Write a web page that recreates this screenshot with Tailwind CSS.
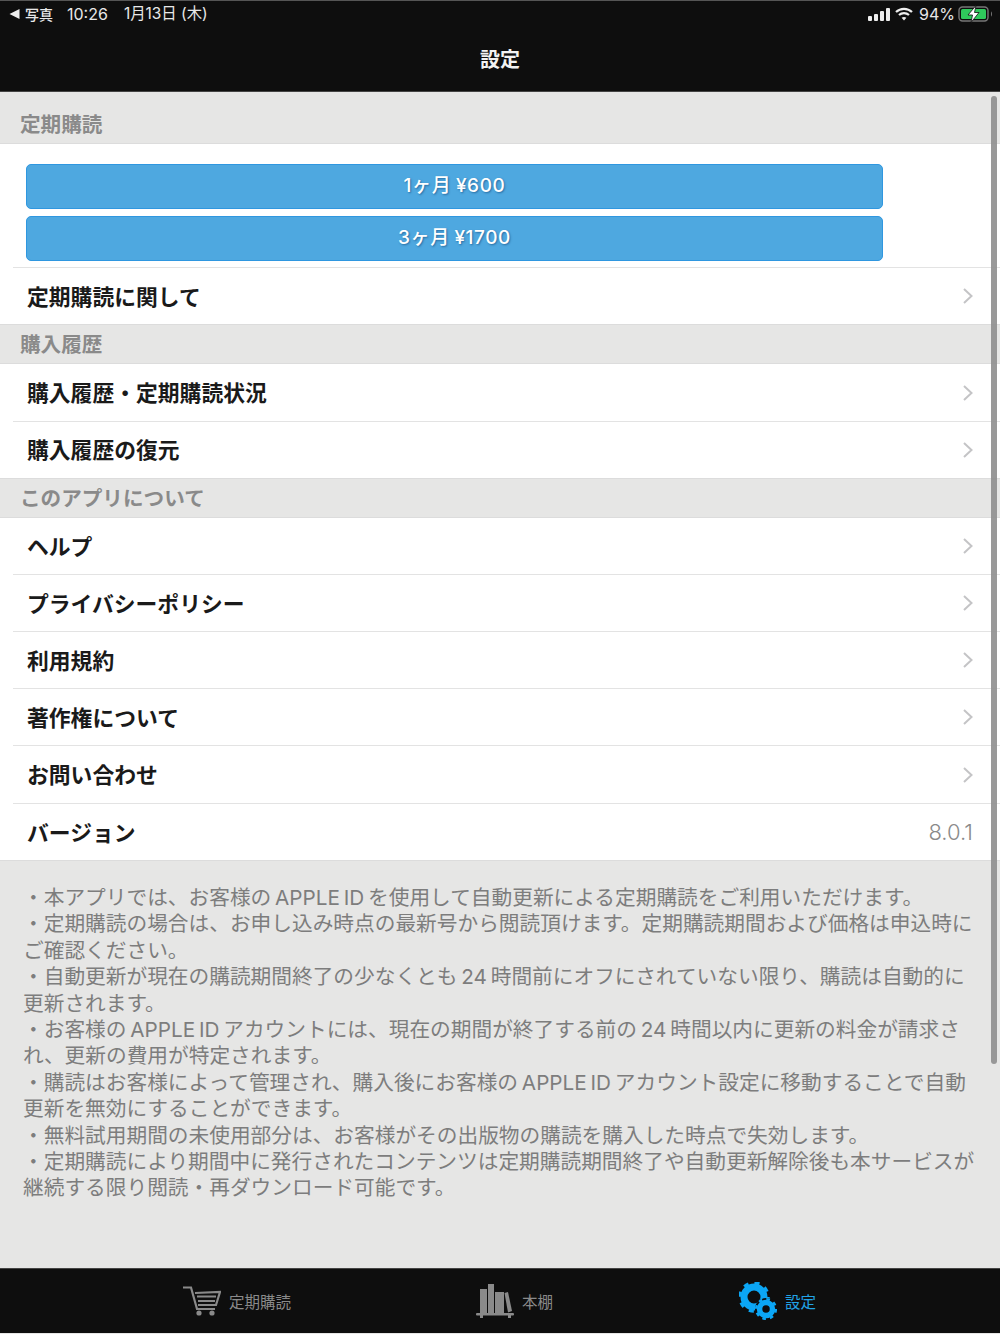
<!DOCTYPE html>
<html lang="ja">
<head>
<meta charset="utf-8">
<script src="https://cdn.jsdelivr.net/npm/@tailwindcss/browser@4"></script>
<title>設定</title>
</head>
<body class="bg-white">
<div class="relative w-[1000px] h-[1334px] overflow-hidden flex flex-col bg-[#e6e6e5] font-['Noto_Sans_CJK_JP','Noto_Sans',sans-serif]">
  <!-- Nav -->
  <header class="h-[92px] shrink-0 bg-[#0e0e0e] border-t border-[#555] border-b border-b-[#444] flex flex-col text-white">
    <div class="h-[26px] flex items-center justify-between pl-[9px] pr-[6px] text-[15.4px] text-[#e8e8e8] font-['Inter','Noto_Sans_CJK_JP',sans-serif]">
      <div class="flex items-center">
        <svg width="11" height="10" viewBox="0 0 11 10"><path d="M0.5 5 L10.5 0 V10 Z" fill="#eee"/></svg>
        <span class="ml-[5px] text-[14px] font-medium">写真</span>
        <span class="ml-[14px] text-[16px]">10:26</span>
        <span class="ml-[16px]">1月13日 (木)</span>
      </div>
      <div class="flex items-center">
        <svg width="22" height="13" viewBox="0 0 22 13" fill="#eee"><rect x="0" y="8" width="4" height="5" rx="1"/><rect x="6" y="6" width="4" height="7" rx="1"/><rect x="12" y="3" width="4" height="10" rx="1"/><rect x="18" y="0" width="4" height="13" rx="1"/></svg>
        <svg class="ml-[5px]" width="18" height="14" viewBox="0 0 18 14" fill="none" stroke="#eee" stroke-width="2.2"><path d="M1 5 C5.5 0.7 12.5 0.7 17 5"/><path d="M4 8 C6.8 5.4 11.2 5.4 14 8"/><path d="M9 13.5 L6.6 10.8 C8 9.7 10 9.7 11.4 10.8 Z" fill="#eee" stroke="none"/></svg>
        <span class="ml-[6px] text-[16px]">94%</span>
        <svg class="ml-[3px]" width="36" height="18" viewBox="0 0 36 18"><rect x="1" y="2" width="29" height="14" rx="3.5" fill="none" stroke="#777" stroke-width="1.4"/><rect x="3" y="4" width="25" height="10" rx="1.5" fill="#2fc95c"/><path d="M33 6.5 C34.3 7 34.3 11 33 11.5 Z" fill="#777"/><path d="M18 0.5 L10 10 H14.5 L13 17.5 L21 7.5 H16.5 Z" fill="#fff" stroke="#0e0e0e" stroke-width="0.8"/></svg>
      </div>
    </div>
    <div class="h-[30px] mt-[17px] flex items-center justify-center text-[20px] font-bold text-[#f2f2f2]">設定</div>
  </header>

  <main class="flex-1 flex flex-col">
    <div class="h-[52px] pl-[20px] pt-[14px] text-[20.6px] leading-[35px] font-bold text-[#8a8a8a] border-b border-[#dcdcdc]">定期購読</div>
    <section class="bg-white">
      <div class="pt-[20px] pb-[6px] pl-[26px] flex flex-col gap-[7px]">
        <button class="w-[857px] h-[45px] rounded-[5px] bg-[#4ea8e0] border border-[#2f97e0] text-white text-[19px] font-medium font-['Inter','Noto_Sans_CJK_JP',sans-serif] tracking-[0.6px] [word-spacing:-1px] [text-shadow:1px_1px_2px_rgba(0,50,100,0.5)]">1ヶ月 ¥600</button>
        <button class="w-[857px] h-[45px] rounded-[5px] bg-[#4ea8e0] border border-[#2f97e0] text-white text-[19px] font-medium font-['Inter','Noto_Sans_CJK_JP',sans-serif] tracking-[0.6px] [word-spacing:-1px] [text-shadow:1px_1px_2px_rgba(0,50,100,0.5)]">3ヶ月 ¥1700</button>
      </div>
      <div class="ml-[13px] border-t border-[#e3e3e3] h-[57px] pl-[14px] pr-[27px] flex items-center justify-between">
        <span class="text-[21.8px] font-bold text-[#1a1a1a]">定期購読に関して</span>
        <svg width="10" height="16" viewBox="0 0 10 16" fill="none" stroke="#c4c4c6" stroke-width="2"><path d="M1 1 L8.5 8 L1 15"/></svg>
      </div>
    </section>

    <div class="h-[40px] pl-[20px] pb-[1px] border-y border-[#dcdcdc] flex items-center text-[20.6px] font-bold text-[#8a8a8a]">購入履歴</div>
    <section class="bg-white">
      <div class="ml-[13px] h-[57px] pl-[14px] pr-[27px] flex items-center justify-between">
        <span class="text-[21.8px] font-bold text-[#1a1a1a]">購入履歴・定期購読状況</span>
        <svg width="10" height="16" viewBox="0 0 10 16" fill="none" stroke="#c4c4c6" stroke-width="2"><path d="M1 1 L8.5 8 L1 15"/></svg>
      </div>
      <div class="ml-[13px] border-t border-[#e3e3e3] h-[57px] pl-[14px] pr-[27px] pb-[1px] flex items-center justify-between">
        <span class="text-[21.8px] font-bold text-[#1a1a1a]">購入履歴の復元</span>
        <svg width="10" height="16" viewBox="0 0 10 16" fill="none" stroke="#c4c4c6" stroke-width="2"><path d="M1 1 L8.5 8 L1 15"/></svg>
      </div>
    </section>

    <div class="h-[40px] pl-[20px] pb-[1px] border-y border-[#dcdcdc] flex items-center text-[20.6px] font-bold text-[#8a8a8a]">このアプリについて</div>
    <section class="bg-white border-b border-[#dcdcdc]">
      <div class="ml-[13px] h-[56px] pl-[14px] pr-[27px] flex items-center justify-between">
        <span class="text-[21.8px] font-bold text-[#1a1a1a]">ヘルプ</span>
        <svg width="10" height="16" viewBox="0 0 10 16" fill="none" stroke="#c4c4c6" stroke-width="2"><path d="M1 1 L8.5 8 L1 15"/></svg>
      </div>
      <div class="ml-[13px] border-t border-[#e3e3e3] h-[57px] pl-[14px] pr-[27px] flex items-center justify-between">
        <span class="text-[21.8px] font-bold text-[#1a1a1a]">プライバシーポリシー</span>
        <svg width="10" height="16" viewBox="0 0 10 16" fill="none" stroke="#c4c4c6" stroke-width="2"><path d="M1 1 L8.5 8 L1 15"/></svg>
      </div>
      <div class="ml-[13px] border-t border-[#e3e3e3] h-[57px] pl-[14px] pr-[27px] flex items-center justify-between">
        <span class="text-[21.8px] font-bold text-[#1a1a1a]">利用規約</span>
        <svg width="10" height="16" viewBox="0 0 10 16" fill="none" stroke="#c4c4c6" stroke-width="2"><path d="M1 1 L8.5 8 L1 15"/></svg>
      </div>
      <div class="ml-[13px] border-t border-[#e3e3e3] h-[57px] pl-[14px] pr-[27px] flex items-center justify-between">
        <span class="text-[21.8px] font-bold text-[#1a1a1a]">著作権について</span>
        <svg width="10" height="16" viewBox="0 0 10 16" fill="none" stroke="#c4c4c6" stroke-width="2"><path d="M1 1 L8.5 8 L1 15"/></svg>
      </div>
      <div class="ml-[13px] border-t border-[#e3e3e3] h-[58px] pl-[14px] pr-[27px] flex items-center justify-between">
        <span class="text-[21.8px] font-bold text-[#1a1a1a]">お問い合わせ</span>
        <svg width="10" height="16" viewBox="0 0 10 16" fill="none" stroke="#c4c4c6" stroke-width="2"><path d="M1 1 L8.5 8 L1 15"/></svg>
      </div>
      <div class="ml-[13px] border-t border-[#e3e3e3] h-[57px] pl-[14px] pr-[27px] flex items-center justify-between">
        <span class="text-[21.8px] font-bold text-[#1a1a1a]">バージョン</span>
        <span class="text-[22px] pt-[1px] text-[#8a8a8a] font-['Inter',sans-serif] font-light">8.0.1</span>
      </div>
    </section>

    <div class="pt-[24px] pl-[23px] pr-[20px] text-[20.7px] leading-[26.4px] text-[#7d7d7d] whitespace-nowrap font-['Inter','Noto_Sans_CJK_JP',sans-serif] [word-spacing:-2px]">
      <div>・本アプリでは、お客様の APPLE ID を使用して自動更新による定期購読をご利用いただけます。</div>
      <div>・定期購読の場合は、お申し込み時点の最新号から閲読頂けます。定期購読期間および価格は申込時に</div>
      <div>ご確認ください。</div>
      <div>・自動更新が現在の購読期間終了の少なくとも 24 時間前にオフにされていない限り、購読は自動的に</div>
      <div>更新されます。</div>
      <div>・お客様の APPLE ID アカウントには、現在の期間が終了する前の 24 時間以内に更新の料金が請求さ</div>
      <div>れ、更新の費用が特定されます。</div>
      <div>・購読はお客様によって管理され、購入後にお客様の APPLE ID アカウント設定に移動することで自動</div>
      <div>更新を無効にすることができます。</div>
      <div>・無料試用期間の未使用部分は、お客様がその出版物の購読を購入した時点で失効します。</div>
      <div>・定期購読により期間中に発行されたコンテンツは定期購読期間終了や自動更新解除後も本サービスが</div>
      <div>継続する限り閲読・再ダウンロード可能です。</div>
    </div>
  </main>

  <!-- Tab bar -->
  <nav class="h-[65px] shrink-0 mb-[1px] bg-[#0e0e0e] border-t border-[#444] relative flex text-[15.5px] text-[#8a8a8a]">
    <div class="w-[333px] h-full flex items-center pl-[182px] pb-[1px]">
      <svg width="39" height="30" viewBox="0 0 39 30" fill="none" stroke="#8a8a8a"><path d="M1 1.5 H9 L15 23 H33" stroke-width="2.2"/><path d="M13 7 L38 6 L34 19 H16" stroke-width="2.2"/><path d="M15 10.5 H34 M16 15 H33" stroke-width="1.8"/><circle cx="17" cy="27" r="2.6" fill="#8a8a8a" stroke="none"/><circle cx="30" cy="27" r="2.6" fill="#8a8a8a" stroke="none"/></svg>
      <span class="ml-[8px] pt-[3px]">定期購読</span>
    </div>
    <div class="w-[333px] h-full flex items-center pl-[143px] pb-[1px]">
      <svg width="39" height="36" viewBox="0 0 39 36" fill="#8a8a8a"><rect x="4" y="6" width="7" height="24"/><rect x="12" y="1" width="6" height="29"/><rect x="19" y="9" width="9" height="21"/><path d="M28.5 10 L32 9 L36 28 L32 29.5 Z"/><rect x="0" y="30" width="38" height="2.5" rx="1"/><rect x="4" y="32" width="3" height="3"/><rect x="32" y="32" width="3" height="3"/></svg>
      <span class="ml-[7px] pt-[3px]">本棚</span>
    </div>
    <div class="flex-1 h-full flex items-center pl-[73px] text-[#21a3e6] pb-[1px]">
      <svg width="38" height="38" viewBox="0 0 38 38" fill="none" stroke="#0ba6f5">
        <circle cx="15" cy="15" r="10" stroke-width="7"/>
        <circle cx="15" cy="15" r="14" stroke-width="3.5" stroke-dasharray="5 6"/>
        <circle cx="27" cy="27" r="9.5" fill="#0e0e0e" stroke="#0e0e0e" stroke-width="3"/>
        <circle cx="27" cy="27" r="6.5" stroke-width="5.5"/>
        <circle cx="27" cy="27" r="9.8" stroke-width="2.6" stroke-dasharray="3.6 4.1"/>
      </svg>
      <span class="ml-[8px] pt-[3px]">設定</span>
    </div>
  </nav>

  <!-- Scroll indicator -->
  <div class="absolute left-[991px] top-[96px] w-[6px] h-[968px] rounded-full bg-[#8e8e8e]/90"></div>
</div>
</body>
</html>
